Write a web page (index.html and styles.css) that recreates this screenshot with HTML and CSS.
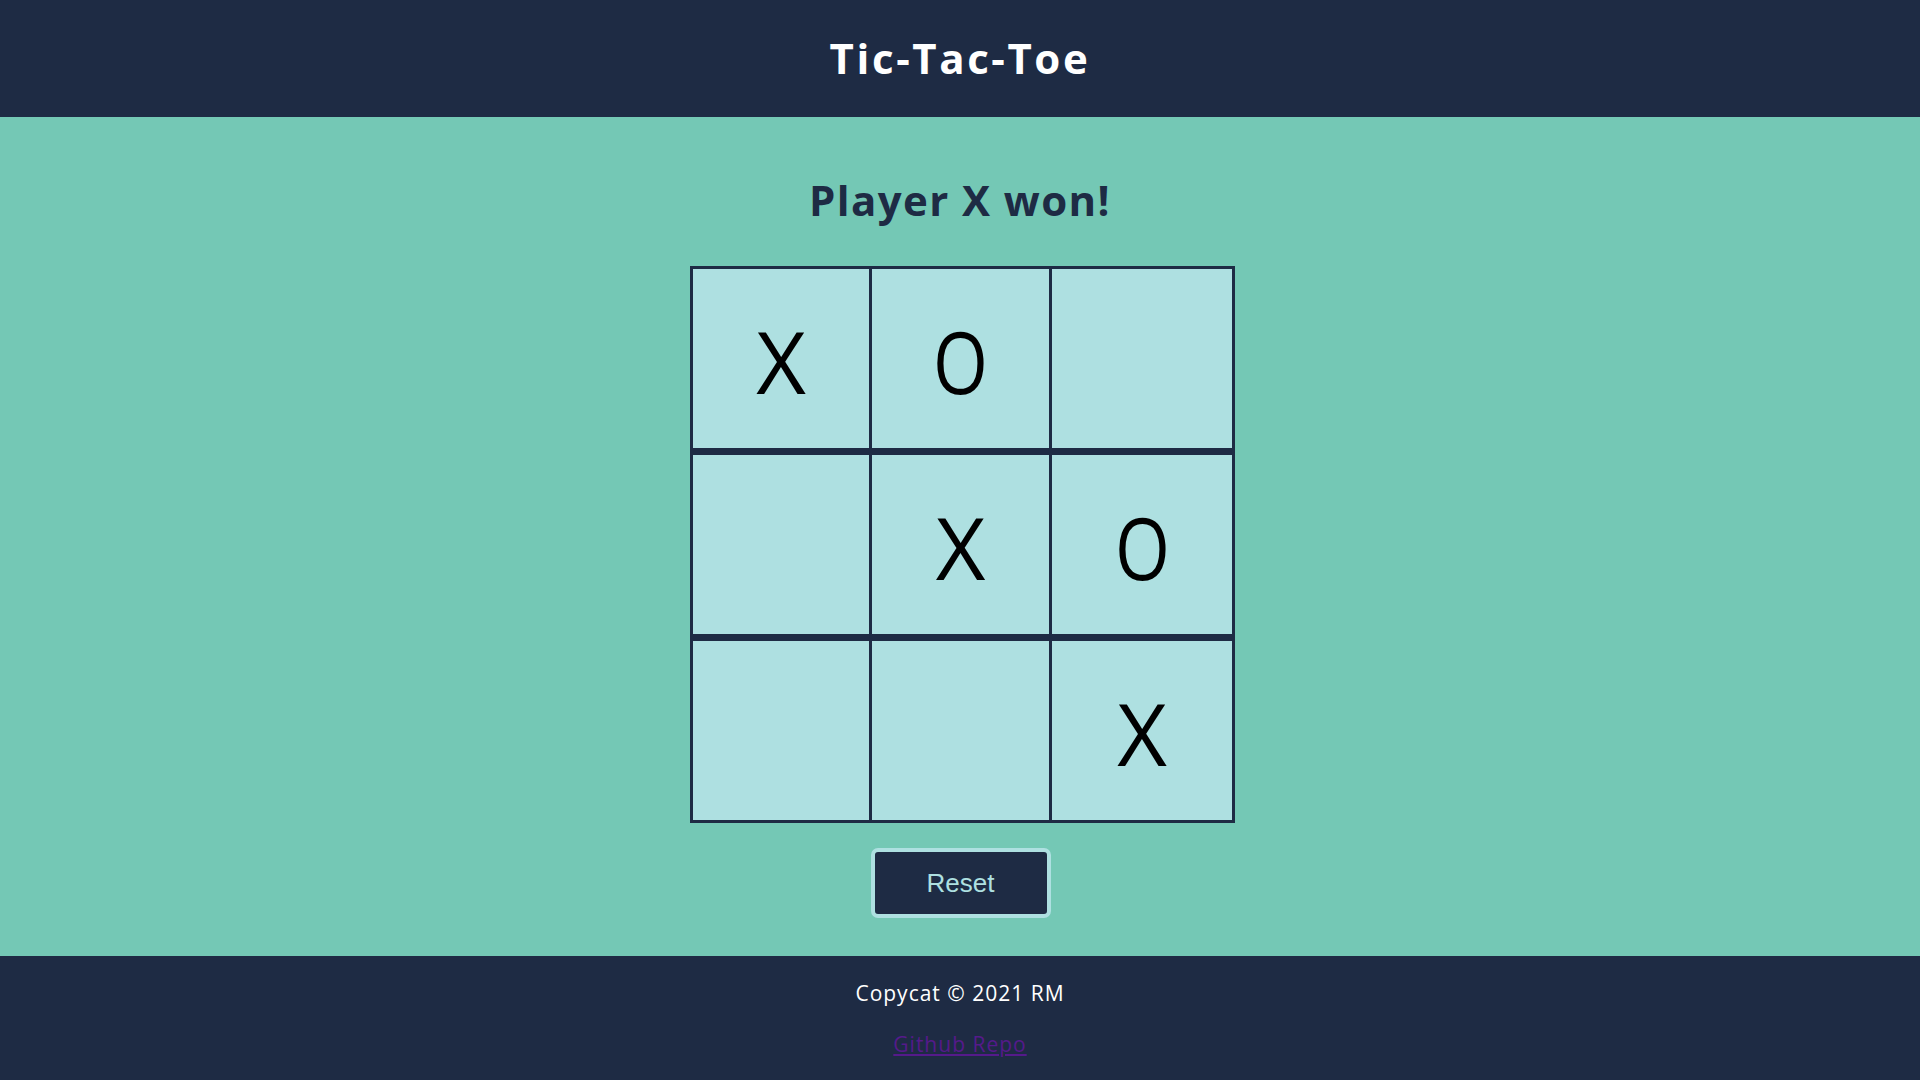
FILE: index.html
```html
<!DOCTYPE html>
<html lang="en">
<head>
<meta charset="utf-8">
<title>Tic-Tac-Toe</title>
<link rel="stylesheet" href="styles.css">
</head>
<body>
<header class="site-header">
  <h1 class="site-title">Tic-Tac-Toe</h1>
</header>
<main class="game">
  <h2 class="status">Player X won!</h2>
  <div class="board">
    <button class="cell">X</button>
    <button class="cell"><span class="mark-o">O</span></button>
    <button class="cell"></button>
    <button class="cell"></button>
    <button class="cell">X</button>
    <button class="cell"><span class="mark-o">O</span></button>
    <button class="cell"></button>
    <button class="cell"></button>
    <button class="cell">X</button>
  </div>
  <button class="reset">Reset</button>
</main>
<footer class="site-footer">
  <p class="copy">Copycat © 2021 RM</p>
  <a class="repo" href="#">Github Repo</a>
</footer>
</body>
</html>
```

FILE: styles.css
```css
* { box-sizing: border-box; }
html, body { margin: 0; padding: 0; }
body {
  font-family: "Open Sans", "DejaVu Sans", sans-serif;
  background: #1e2b44;
  height: 1080px;
  display: flex;
  flex-direction: column;
}
.site-header {
  height: 117px;
  background: #1e2b44;
  display: flex;
  align-items: center;
  justify-content: center;
}
.site-title {
  margin: 0;
  color: #ffffff;
  font-size: 42px;
  font-weight: 700;
  line-height: 1;
  letter-spacing: 2.6px;
  padding-bottom: 2px;
}
.game {
  background: #74c8b5;
  display: flex;
  flex-direction: column;
  align-items: center;
  padding-top: 53px;
  height: 839px;
}
.status {
  margin: 0;
  color: #1e2b44;
  font-size: 42px;
  font-weight: 700;
  line-height: 60px;
  height: 60px;
  letter-spacing: 1.4px;
}
.board {
  margin-top: 36px;
  margin-left: 5px;
  display: grid;
  grid-template-columns: 176px 177px 180px;
  grid-template-rows: 179px 179px 179px;
  column-gap: 3px;
  row-gap: 7px;
  border: 3px solid #1e2b44;
  background: #1e2b44;
}
.cell {
  border: none;
  margin: 0;
  padding: 4px 0 0 0;
  background: #aee0e1;
  color: #000000;
  font-family: "Open Sans", "DejaVu Sans", sans-serif;
  font-size: 86px;
  font-weight: 400;
  line-height: 1;
  display: flex;
  align-items: center;
  justify-content: center;
}
.mark-o {
  display: inline-block;
  transform: scaleX(0.82);
}
.reset {
  margin-top: 25px;
  margin-left: 1px;
  width: 180px;
  height: 70px;
  background: #1e2b44;
  border: 4px solid #aee0e1;
  border-radius: 7px;
  color: #aee0e1;
  font-family: "Liberation Sans", Arial, sans-serif;
  font-size: 26px;
}
.site-footer {
  flex: 1;
  background: #1e2b44;
  display: flex;
  flex-direction: column;
  align-items: center;
  padding-top: 23px;
}
.copy {
  margin: 0;
  color: #ffffff;
  font-size: 21px;
  line-height: 28px;
  letter-spacing: 1px;
}
.repo {
  margin-top: 23px;
  color: #551a8b;
  font-size: 21px;
  line-height: 28px;
  letter-spacing: 1px;
}
```
